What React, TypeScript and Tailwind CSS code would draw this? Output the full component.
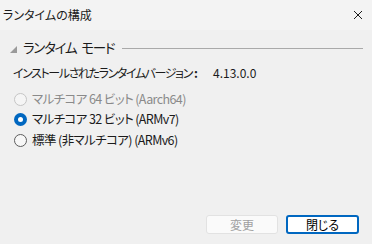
import React from "react";

const font = "font-['Yu_Gothic_UI','Noto_Sans_CJK_JP',sans-serif] [font-feature-settings:'palt']";

function Radio({ state }: { state: "disabled" | "checked" | "unchecked" }) {
  if (state === "checked") {
    return (
      <span className="w-[13px] h-[13px] rounded-full bg-[#0067c0] flex items-center justify-center shrink-0">
        <span className="w-[5px] h-[5px] rounded-full bg-white" />
      </span>
    );
  }
  if (state === "disabled") {
    return <span className="w-[13px] h-[13px] rounded-full border border-[#c5c5c5] bg-[#f5f5f5] shrink-0" />;
  }
  return <span className="w-[13px] h-[13px] rounded-full border border-[#5d5d5d] bg-[#f7f7f7] shrink-0" />;
}

export default function App() {
  return (
    <div className={`w-[372px] h-[244px] bg-[#f0f0f0] flex flex-col text-[#1b1b1b] ${font}`}>
      <div className="h-[30px] bg-[#f3f3f3] flex items-center justify-between pl-[3px] pr-[8px]">
        <span className="text-[12px] leading-none whitespace-nowrap">ランタイムの構成</span>
        <svg width="10" height="10" viewBox="0 0 10 10" className="mr-[1px]">
          <path d="M1 1 L9 9 M9 1 L1 9" stroke="#1b1b1b" strokeWidth="1" />
        </svg>
      </div>
      <div className="flex-1 flex flex-col px-[10px] pt-[9px]">
        <div className="flex items-center h-[18px]">
          <svg width="7" height="7" viewBox="0 0 7 7" className="mt-[2px]">
            <path d="M7 0 L7 7 L0 7 Z" fill="#9a9a9a" />
          </svg>
          <span className="ml-[6px] text-[13.5px] tracking-[-1.3px] leading-none whitespace-nowrap">ランタイム</span>
          <span className="ml-[5px] text-[13.5px] tracking-[-1.3px] leading-none whitespace-nowrap">モード</span>
          <div className="flex-1 h-px bg-[#a9a9a9] ml-[8px] mr-[-1px]" />
        </div>
        <div className="flex items-center mt-[8px] ml-[3px] text-[12px] h-[16px] whitespace-nowrap">
          <span className="w-[181px] tracking-[-1.4px]">インストールされたランタイムバージョン</span>
          <span className="w-[19px] font-bold">:</span>
          <span>4.13.0.0</span>
        </div>
        <div className="flex flex-col mt-[10px] ml-[4px] text-[12.5px] tracking-[-0.6px] gap-[4px] whitespace-nowrap">
          <div className="flex items-center gap-[5px] h-[16px] text-[#8a8a8a]">
            <Radio state="disabled" />
            <span>マルチコア 64 ビット (Aarch64)</span>
          </div>
          <div className="flex items-center gap-[5px] h-[16px]">
            <Radio state="checked" />
            <span>マルチコア 32 ビット (ARMv7)</span>
          </div>
          <div className="flex items-center gap-[5px] h-[16px] mt-[1px]">
            <Radio state="unchecked" />
            <span>標準 (非マルチコア) (ARMv6)</span>
          </div>
        </div>
        <div className="flex-1" />
        <div className="flex justify-end gap-[8px] pb-[10px] pr-[3px]">
          <button className="w-[72px] h-[19px] rounded-[3px] border border-[#e2e2e2] bg-[#fafafa] text-[12px] text-[#a0a0a0] leading-none flex items-center justify-center">
            変更
          </button>
          <button className="w-[73px] h-[19px] rounded-[3px] border-2 border-[#0067c0] bg-white text-[12px] text-black leading-none flex items-center justify-center">
            閉じる
          </button>
        </div>
      </div>
    </div>
  );
}
